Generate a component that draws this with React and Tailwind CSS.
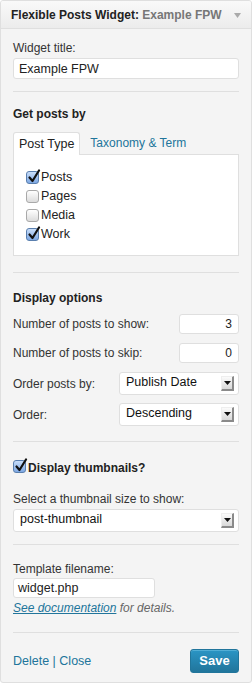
import React from "react";

function Check({ checked }) {
  return (
    <span
      className={
        "relative inline-flex w-[13px] h-[13px] shrink-0 rounded-[3px] border " +
        (checked
          ? "border-[#5a7fae] bg-gradient-to-b from-[#c9defa] to-[#7ea8e3]"
          : "border-[#a9a9a9] bg-gradient-to-b from-[#ffffff] to-[#dcdcdc]")
      }
    >
      {checked && (
        <svg
          className="absolute left-[0px] top-[-3px]"
          width="14"
          height="15"
          viewBox="0 0 14 15"
        >
          <path
            d="M2.5 8.5 L5.5 12 L12 1.5"
            fill="none"
            stroke="#111"
            strokeWidth="2.2"
            strokeLinecap="round"
            strokeLinejoin="round"
          />
        </svg>
      )}
    </span>
  );
}

function SelectArrow() {
  return (
    <span className="flex items-center justify-center w-[13px] h-[15px] bg-gradient-to-b from-[#fbfbfb] to-[#d8d8d8] border-r-2 border-b-2 border-[#8a8a8a] border-t border-l border-t-[#eee] border-l-[#eee]">
      <svg width="7" height="4" viewBox="0 0 7 4">
        <path d="M0 0 L7 0 L3.5 4 Z" fill="#111" />
      </svg>
    </span>
  );
}

function Select({ value, className }) {
  return (
    <div
      className={
        "flex items-center justify-between bg-white border border-[#dfdfdf] rounded-[3px] pl-[6px] pr-[4px] " +
        className
      }
    >
      <span className="text-[12.5px] leading-[16px] text-[#111] -mt-[3px]">{value}</span>
      <SelectArrow />
    </div>
  );
}

function Divider({ className }) {
  return <div className={"h-px bg-[#dfdfdf] " + (className || "")} />;
}

export default function App() {
  return (
    <div className="w-[252px] h-[683px] bg-white">
      <div
        className="w-[252px] h-[683px] border border-[#dfdfdf] rounded-[3px] bg-[#f4f4f4] overflow-hidden text-[12px] leading-[16px] text-[#333] flex flex-col"
        style={{ fontFamily: '"Liberation Sans", Arial, sans-serif' }}
      >
        {/* Header */}
        <div className="h-[28px] shrink-0 bg-gradient-to-b from-[#f9f9f9] to-[#ececec] border-b border-[#dfdfdf] flex items-center justify-between pl-[10px] pr-[10px]">
          <span className="font-bold text-[12px] text-[#222] whitespace-nowrap">
            Flexible Posts Widget: <span className="text-[#777]">Example FPW</span>
          </span>
          <svg width="7" height="5" viewBox="0 0 7 5" className="mt-[1px]">
            <path d="M0 0 L7 0 L3.5 5 Z" fill="#aaa" />
          </svg>
        </div>

        <div className="px-[12px] flex flex-col">
          {/* Widget title */}
          <div className="mt-[11px]">Widget title:</div>
          <div className="mt-[2px] h-[21px] bg-white border border-[#dfdfdf] rounded-[3px] flex items-center px-[5px] text-[#222] text-[12.5px]">
            Example FPW
          </div>

          <Divider className="mt-[12px]" />

          {/* Get posts by */}
          <div className="mt-[14px] font-bold text-[#222]">Get posts by</div>

          <div className="mt-[10px] flex items-end">
            <div className="h-[23px] px-[5px] bg-white border border-[#dfdfdf] border-b-0 rounded-t-[3px] flex items-center text-[#222] relative z-10 -mb-px text-[12.5px]">
              Post Type
            </div>
            <div className="h-[22px] px-[10px] flex items-center text-[#21759b]">
              Taxonomy &amp; Term
            </div>
          </div>
          <div className="h-[102px] bg-white border border-[#dfdfdf] pt-[13px] pl-[12px] flex flex-col">
            {[
              ["Posts", true],
              ["Pages", false],
              ["Media", false],
              ["Work", true],
            ].map(([label, c]) => (
              <div key={label} className="h-[19px] flex items-center gap-[2px] text-[#222] text-[12.5px]">
                <span className="mt-[3px]"><Check checked={c} /></span>
                <span className="-mt-[1px]">{label}</span>
              </div>
            ))}
          </div>

          <Divider className="mt-[16px]" />

          {/* Display options */}
          <div className="mt-[17px] font-bold text-[#222]">Display options</div>

          <div className="mt-[8px] h-[20px] flex items-center justify-between">
            <span>Number of posts to show:</span>
            <div className="w-[60px] h-[20px] bg-white border border-[#dfdfdf] rounded-[3px] flex items-center justify-end px-[6px] text-[#222]">
              3
            </div>
          </div>
          <div className="mt-[9px] h-[20px] flex items-center justify-between">
            <span>Number of posts to skip:</span>
            <div className="w-[60px] h-[20px] bg-white border border-[#dfdfdf] rounded-[3px] flex items-center justify-end px-[6px] text-[#222]">
              0
            </div>
          </div>
          <div className="mt-[9px] h-[23px] flex items-center justify-between">
            <span>Order posts by:</span>
            <Select value="Publish Date" className="w-[120px] h-[23px]" />
          </div>
          <div className="mt-[8px] h-[23px] flex items-center justify-between">
            <span>Order:</span>
            <Select value="Descending" className="w-[120px] h-[23px]" />
          </div>

          <Divider className="mt-[15px]" />

          {/* Thumbnails */}
          <div className="mt-[18px] h-[16px] flex items-center gap-[2px] font-bold text-[#222]">
            <span className="mt-[1px]"><Check checked /></span>
            <span>Display thumbnails?</span>
          </div>
          <div className="mt-[15px]">Select a thumbnail size to show:</div>
          <Select value="post-thumbnail" className="mt-[2px] w-full h-[23px]" />

          <Divider className="mt-[12px]" />

          {/* Template */}
          <div className="mt-[16px]">Template filename:</div>
          <div className="mt-[1px] w-[142px] h-[20px] bg-white border border-[#dfdfdf] rounded-[3px] flex items-center px-[4px] text-[#222] text-[12.5px]">
            widget.php
          </div>
          <div className="mt-[2px] italic text-[#666]">
            <span className="text-[#21759b] underline">See documentation</span> for details.
          </div>

          <Divider className="mt-[16px]" />

          {/* Footer */}
          <div className="mt-[16px] flex items-center justify-between">
            <span className="text-[#21759b] text-[12.5px]">Delete | Close</span>
            <button className="w-[49px] h-[24px] rounded-[3px] border border-[#21759b] bg-gradient-to-b from-[#2a95c5] to-[#21759b] text-white font-bold text-[13px] flex items-center justify-center shadow-[inset_0_1px_0_rgba(120,200,230,0.5)]">
              Save
            </button>
          </div>
        </div>
      </div>
    </div>
  );
}
